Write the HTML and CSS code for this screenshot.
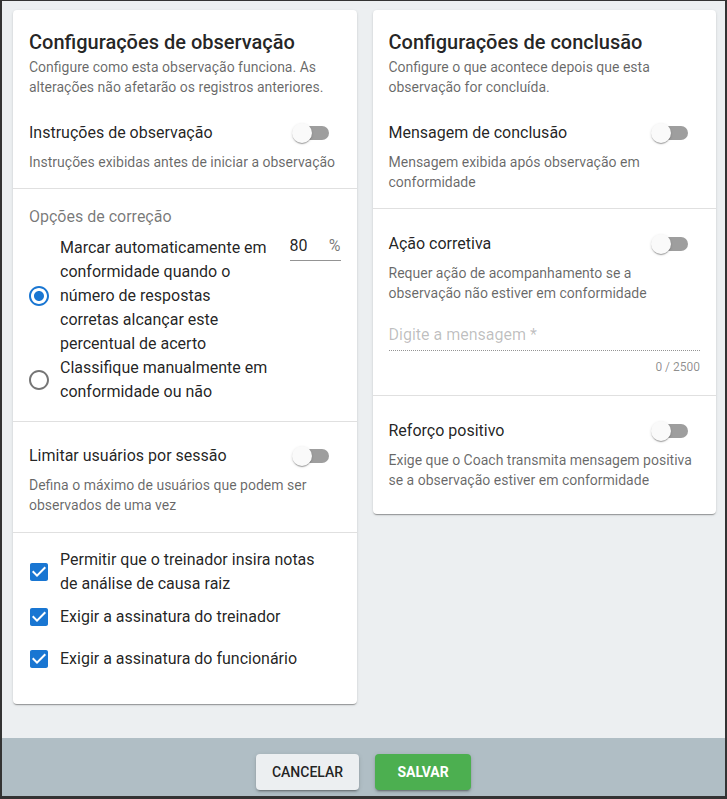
FILE: index.html
```html
<!DOCTYPE html>
<html lang="pt-BR">
<head>
<meta charset="utf-8">
<title>Configurações</title>
<link rel="stylesheet" href="styles.css">
</head>
<body>
<main class="content">
  <section class="card">
    <div class="card-head">
      <h2 class="card-title">Configurações de observação</h2>
      <p class="card-sub">Configure como esta observação funciona. As alterações não afetarão os registros anteriores.</p>
    </div>
    <div class="section s-first">
      <div class="toggle-row">
        <span class="label">Instruções de observação</span>
        <span class="toggle"><span class="track"></span><span class="thumb"></span></span>
      </div>
      <p class="desc">Instruções exibidas antes de iniciar a observação</p>
    </div>
    <div class="section s-options">
      <div class="group-label">Opções de correção</div>
      <div class="radio-opt first">
        <svg class="icon" viewBox="0 0 24 24" width="24" height="24"><path fill="#1976d2" d="M12 7c-2.76 0-5 2.24-5 5s2.240 5 5 5 5-2.24 5-5-2.24-5-5-5zm0-5C6.48 2 2 6.48 2 12s4.48 10 10 10 10-4.48 10-10S17.52 2 12 2zm0 18c-4.42 0-8-3.580-8-8s3.58-8 8-8 8 3.58 8 8-3.58 8-8 8z"/></svg>
        <span class="opt-text">Marcar automaticamente em conformidade quando o número de respostas corretas alcançar este percentual de acerto</span>
        <span class="pct-field"><span class="pct-value">80</span><span class="pct-unit">%</span></span>
      </div>
      <div class="radio-opt second">
        <svg class="icon" viewBox="0 0 24 24" width="24" height="24"><path fill="rgba(0,0,0,0.54)" d="M12 2C6.48 2 2 6.48 2 12s4.48 10 10 10 10-4.48 10-10S17.52 2 12 2zm0 18c-4.42 0-8-3.58-8-8s3.58-8 8-8 8 3.58 8 8-3.58 8-8 8z"/></svg>
        <span class="opt-text">Classifique manualmente em conformidade ou não</span>
      </div>
    </div>
    <div class="section s-mid">
      <div class="toggle-row">
        <span class="label">Limitar usuários por sessão</span>
        <span class="toggle"><span class="track"></span><span class="thumb"></span></span>
      </div>
      <p class="desc">Defina o máximo de usuários que podem ser observados de uma vez</p>
    </div>
    <div class="section s-checks last">
      <div class="check-row">
        <svg class="icon" viewBox="0 0 24 24" width="24" height="24"><path fill="#1976d2" d="M19 3H5c-1.11 0-2 .9-2 2v14c0 1.1.89 2 2 2h14c1.11 0 2-.9 2-2V5c0-1.1-.89-2-2-2zm-9 14l-5-5 1.41-1.41L10 14.170l7.59-7.59L19 8l-9 9z"/></svg>
        <span class="check-text">Permitir que o treinador insira notas de análise de causa raiz</span>
      </div>
      <div class="check-row">
        <svg class="icon" viewBox="0 0 24 24" width="24" height="24"><path fill="#1976d2" d="M19 3H5c-1.11 0-2 .9-2 2v14c0 1.1.89 2 2 2h14c1.11 0 2-.9 2-2V5c0-1.1-.89-2-2-2zm-9 14l-5-5 1.41-1.41L10 14.170l7.59-7.59L19 8l-9 9z"/></svg>
        <span class="check-text">Exigir a assinatura do treinador</span>
      </div>
      <div class="check-row">
        <svg class="icon" viewBox="0 0 24 24" width="24" height="24"><path fill="#1976d2" d="M19 3H5c-1.11 0-2 .9-2 2v14c0 1.1.89 2 2 2h14c1.11 0 2-.9 2-2V5c0-1.1-.89-2-2-2zm-9 14l-5-5 1.41-1.41L10 14.170l7.59-7.59L19 8l-9 9z"/></svg>
        <span class="check-text">Exigir a assinatura do funcionário</span>
      </div>
    </div>
  </section>

  <section class="card">
    <div class="card-head">
      <h2 class="card-title">Configurações de conclusão</h2>
      <p class="card-sub">Configure o que acontece depois que esta observação for concluída.</p>
    </div>
    <div class="section s-first">
      <div class="toggle-row">
        <span class="label">Mensagem de conclusão</span>
        <span class="toggle"><span class="track"></span><span class="thumb"></span></span>
      </div>
      <p class="desc">Mensagem exibida após observação em conformidade</p>
    </div>
    <div class="section s-right s-field">
      <div class="toggle-row">
        <span class="label">Ação corretiva</span>
        <span class="toggle"><span class="track"></span><span class="thumb"></span></span>
      </div>
      <p class="desc">Requer ação de acompanhamento se a observação não estiver em conformidade</p>
      <div class="text-field"><span class="placeholder">Digite a mensagem *</span></div>
      <div class="helper">0 / 2500</div>
    </div>
    <div class="section s-right last">
      <div class="toggle-row">
        <span class="label">Reforço positivo</span>
        <span class="toggle"><span class="track"></span><span class="thumb"></span></span>
      </div>
      <p class="desc">Exige que o Coach transmita mensagem positiva se a observação estiver em conformidade</p>
    </div>
  </section>
</main>
<footer class="footer">
  <button class="btn btn-cancel" type="button">Cancelar</button>
  <button class="btn btn-save" type="button">Salvar</button>
</footer>
</body>
</html>
```
FILE: styles.css
```css
* { box-sizing: border-box; }

html, body { height: 100%; }

body {
  margin: 0;
  height: 799px;
  display: flex;
  flex-direction: column;
  border-style: solid;
  border-color: #333;
  border-width: 1px 2px 3px 2px;
  font-family: Roboto, "Noto Sans", "Liberation Sans", sans-serif;
  color: rgba(0, 0, 0, 0.87);
  background: #eceff1;
}

.content {
  flex: 1;
  display: grid;
  grid-template-columns: 1fr 1fr;
  gap: 16px;
  align-items: start;
  padding: 9px 9px 0 11px;
  background: #eceff1;
}

.card {
  background: #fff;
  border-radius: 4px;
  box-shadow: 0 2px 1px -1px rgba(0,0,0,0.2), 0 1px 1px 0 rgba(0,0,0,0.14), 0 1px 3px 0 rgba(0,0,0,0.12);
}

.card-head { padding: 17px 16px 0; }

.card-title {
  margin: 0;
  font-size: 20px;
  font-weight: 500;
  line-height: 30px;
  color: rgba(0, 0, 0, 0.87);
}

.card-sub {
  margin: 0;
  font-size: 14px;
  line-height: 20px;
  color: rgba(0, 0, 0, 0.6);
}

.section {
  padding: 0 16px;
  border-bottom: 1px solid #e0e0e0;
}
.section.last { border-bottom: none; }

.s-first { padding-top: 24px; padding-bottom: 16px; }
.s-options { padding-top: 16px; padding-bottom: 17px; }
.s-mid { padding-top: 22px; padding-bottom: 17px; }
.s-checks { padding-top: 15px; padding-bottom: 24px; }
.s-right { padding-top: 23px; padding-bottom: 17px; }
.s-field { padding-bottom: 20px; }
.s-right.last { padding-bottom: 24px; }

.toggle-row {
  display: flex;
  align-items: center;
  justify-content: space-between;
  height: 24px;
}

.label {
  font-size: 16px;
  line-height: 24px;
  color: rgba(0, 0, 0, 0.87);
}

.toggle {
  position: relative;
  width: 37px;
  height: 20px;
  margin-right: 12px;
  flex: none;
}
.toggle .track {
  position: absolute;
  right: 0;
  top: 3px;
  width: 34px;
  height: 14px;
  border-radius: 7px;
  background: #9e9e9e;
}
.toggle .thumb {
  position: absolute;
  left: 0;
  top: 0;
  width: 20px;
  height: 20px;
  border-radius: 50%;
  background: #fafafa;
  box-shadow: 0 2px 1px -1px rgba(0,0,0,0.2), 0 1px 1px 0 rgba(0,0,0,0.14), 0 1px 3px 0 rgba(0,0,0,0.12);
}

.desc {
  margin: 7px 0 0;
  font-size: 14px;
  line-height: 20px;
  color: rgba(0, 0, 0, 0.6);
}

.group-label {
  font-size: 16px;
  line-height: 24px;
  color: rgba(0, 0, 0, 0.54);
}

.icon {
  display: block;
  flex: none;
  margin-left: -2px;
  margin-right: 9px;
}

.radio-opt {
  display: flex;
  align-items: center;
}
.radio-opt.first { margin-top: 7px; }

.opt-text {
  width: 212px;
  font-size: 16px;
  line-height: 24px;
}

.pct-field {
  align-self: flex-start;
  margin-left: auto;
  margin-top: -2px;
  width: 51px;
  display: flex;
  justify-content: space-between;
  align-items: center;
  padding-bottom: 2px;
  border-bottom: 1px solid rgba(0, 0, 0, 0.42);
}
.pct-value { font-size: 16px; line-height: 24px; }
.pct-unit { font-size: 16px; line-height: 24px; color: rgba(0, 0, 0, 0.54); }

.check-row {
  display: flex;
  align-items: center;
  min-height: 42px;
}
.check-text {
  font-size: 16px;
  line-height: 24px;
  padding-right: 16px;
}

.text-field {
  margin-top: 20px;
  padding-bottom: 3px;
  border-bottom: 1px dotted rgba(0, 0, 0, 0.42);
}
.placeholder {
  display: block;
  font-size: 16px;
  line-height: 24px;
  color: rgba(0, 0, 0, 0.26);
}
.helper {
  margin-top: 8px;
  font-size: 12px;
  line-height: 16px;
  text-align: right;
  color: rgba(0, 0, 0, 0.45);
}

.footer {
  height: 58px;
  flex: none;
  background: #b0bec5;
  display: flex;
  justify-content: center;
  align-items: flex-start;
  gap: 16px;
  padding-top: 16px;
}

.btn {
  height: 36px;
  border: none;
  border-radius: 4px;
  font-family: Roboto, "Noto Sans", "Liberation Sans", sans-serif;
  font-size: 14px;
  font-weight: 500;
  text-transform: uppercase;
  padding: 0 16px;
  box-shadow: 0 3px 1px -2px rgba(0,0,0,0.2), 0 2px 2px 0 rgba(0,0,0,0.14), 0 1px 5px 0 rgba(0,0,0,0.12);
  cursor: pointer;
}
.btn-cancel {
  background: #eceff1;
  color: rgba(0, 0, 0, 0.87);
}
.btn-save {
  background: #4caf50;
  color: #fff;
  min-width: 96px;
  font-weight: 700;
}
```
